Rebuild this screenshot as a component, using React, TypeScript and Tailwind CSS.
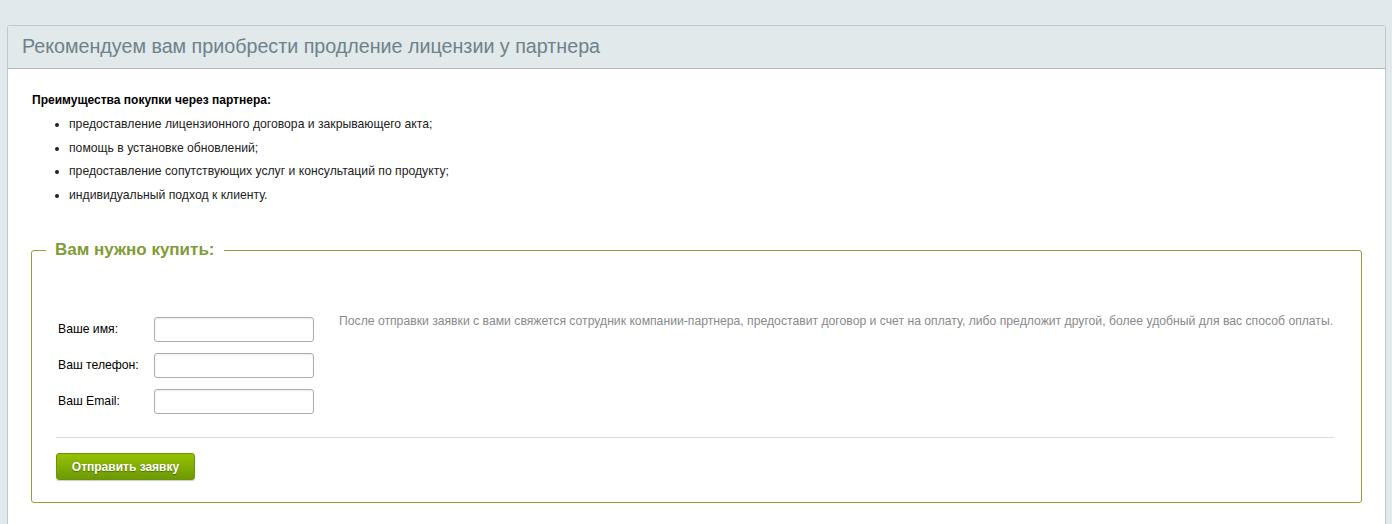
export default function App() {
  const fields = ["Ваше имя:", "Ваш телефон:", "Ваш Email:"];
  const perks = [
    "предоставление лицензионного договора и закрывающего акта;",
    "помощь в установке обновлений;",
    "предоставление сопутствующих услуг и консультаций по продукту;",
    "индивидуальный подход к клиенту.",
  ];
  return (
    <div
      className="min-h-[524px] bg-[#e2e9ec] pt-[25px] pl-[7px] pr-[6px] text-[12.2px] text-[#222]"
      style={{ fontFamily: '"Liberation Sans", Arial, sans-serif' }}
    >
      <div className="min-h-[499px] rounded-t-[3px] border border-b-0 border-[#c2c9cc] bg-white">
        {/* Header */}
        <div className="flex h-[43px] items-center border-b border-[#b3babd] bg-[#e1e9eb] px-[14px] text-[19.7px] text-[#6f8189]">
          Рекомендуем вам приобрести продление лицензии у партнера
        </div>

        {/* Body */}
        <div className="pl-[24px] pr-[23px] pt-[24px]">
          <div className="text-[12px] font-bold leading-[14px] text-black">
            Преимущества покупки через партнера:
          </div>
          <ul className="mt-[6px] list-disc pl-[37px]">
            {perks.map((p) => (
              <li key={p} className="leading-[23.5px]">
                {p}
              </li>
            ))}
          </ul>

          {/* Order box */}
          <div className="relative -ml-px mt-[43px] rounded-[3px] border border-[#89a53e] pb-[22px] pl-[24px] pr-[27px] pt-[66px]">
            <span className="absolute -top-[11px] left-[14px] bg-white px-[9px] text-[17px] font-bold leading-[19px] text-[#7f9c37]">
              Вам нужно купить:
            </span>

            <div className="flex items-start">
              <div className="flex flex-col gap-[11px]">
                {fields.map((f) => (
                  <div key={f} className="flex items-center">
                    <label className="w-[98px] pl-[2px] text-black">{f}</label>
                    <input
                      type="text"
                      className="h-[25px] w-[160px] rounded-[3px] border border-[#a9b0b5] bg-white px-[4px] shadow-[inset_0_1px_2px_rgba(0,0,0,0.08)] outline-none"
                    />
                  </div>
                ))}
              </div>
              <p className="ml-[25px] -mt-[3px] leading-[14px] text-[#8a8a8a]">
                После отправки заявки с вами свяжется сотрудник компании-партнера, предоставит договор и счет на оплату, либо предложит другой, более удобный для вас способ оплаты.
              </p>
            </div>

            <div className="mt-[23px] h-px bg-[#dcdcdc]" />

            <button className="mt-[15px] h-[27px] w-[139px] rounded-[3px] border border-[#6b9500] bg-gradient-to-b from-[#96c100] to-[#6c9a05] text-[12px] font-bold text-white shadow-[0_1px_1px_rgba(0,0,0,0.2)] [text-shadow:0_1px_1px_rgba(0,0,0,0.35)]">
              Отправить заявку
            </button>
          </div>
        </div>
      </div>
    </div>
  );
}
